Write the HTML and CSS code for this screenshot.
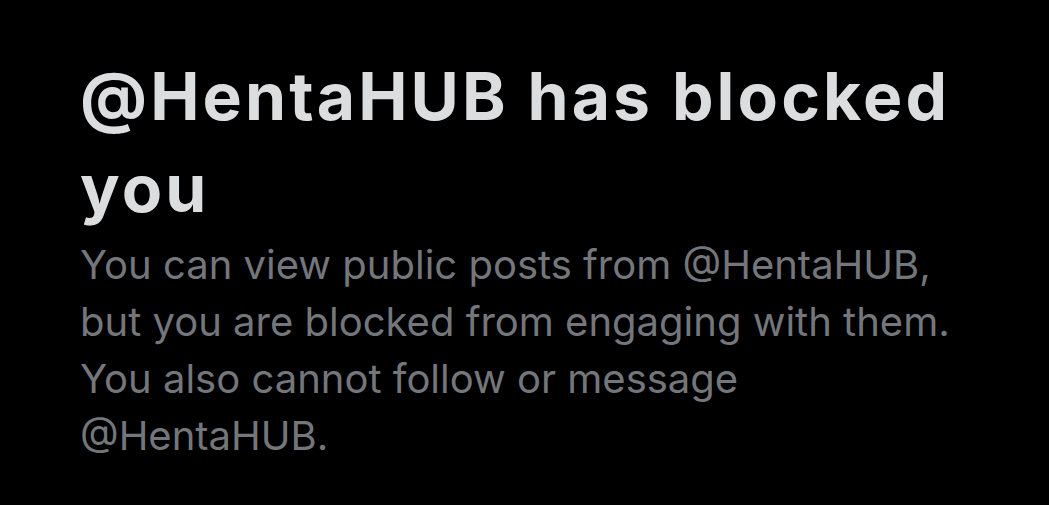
FILE: index.html
```html
<!DOCTYPE html>
<html lang="en">
<head>
  <meta charset="UTF-8" />
  <meta name="viewport" content="width=device-width, initial-scale=1.0" />
  <title>Blocked</title>
  <link rel="stylesheet" href="styles.css">
</head>
<body>
  <div class="blocked">
    <h1 class="blocked-title">@HentaHUB has blocked you</h1>
    <p class="blocked-text">You can view public posts from @HentaHUB, but you are blocked from engaging with them. You also cannot follow or message @HentaHUB.</p>
  </div>
</body>
</html>
```

FILE: styles.css
```css
:root {
  --bg: #000;
  --title: #dcddde;
  --muted: #73777c;
}
body {
  background-color: var(--bg);
  margin: 0;
  font-family: Inter, "Liberation Sans", sans-serif;
}
.blocked {
  padding: 50px 0 0 80px;
  width: 890px;
}
.blocked-title {
  color: var(--title);
  font-size: 66px;
  font-weight: 700;
  letter-spacing: 3.1px;
  line-height: 92px;
  margin: 0;
}
.blocked-text {
  color: var(--muted);
  font-size: 40px;
  line-height: 57px;
  margin: 2px 0 0;
}
```
